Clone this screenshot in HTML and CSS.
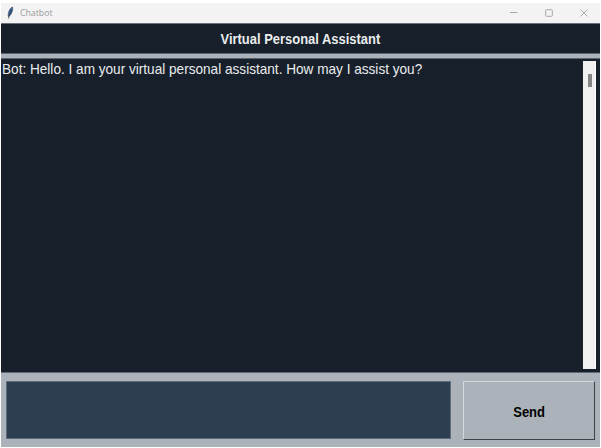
FILE: index.html
```html
<!DOCTYPE html>
<html lang="en">
<head>
<meta charset="utf-8">
<title>Chatbot</title>
<link rel="stylesheet" href="styles.css">
</head>
<body>
<div class="window">
  <header class="titlebar">
    <svg class="feather" viewBox="0 0 8 14" width="8" height="14">
      <path d="M6.6 1C4.3 1.5 2.4 5 2.1 9L2.5 10.8C4.8 9.7 7.4 5 6.6 1Z" fill="#3b6296" stroke="#33435a" stroke-width=".5"/>
      <path d="M5.3 3.5L2.3 12.8" fill="none" stroke="#26303e" stroke-width=".6"/>
    </svg>
    <span class="title">Chatbot</span>
    <div class="controls">
      <svg viewBox="0 0 8 8" width="8" height="8"><path d="M0 3.5H7.5"/></svg>
      <svg viewBox="0 0 8 8" width="8" height="8"><rect x=".7" y=".7" width="6.6" height="6.6" rx=".7"/></svg>
      <svg viewBox="0 0 8 8" width="8" height="8"><path d="M.5 .5L7.5 7.5M7.5 .5L.5 7.5"/></svg>
    </div>
  </header>
  <h1 class="heading"><span>Virtual Personal Assistant</span></h1>
  <main class="chat">
    <p class="message"><span>Bot: Hello. I am your virtual personal assistant. How may I assist you?</span></p>
    <div class="scrollbar"><div class="thumb"></div></div>
  </main>
  <footer class="composer">
    <div class="entry"></div>
    <button class="send"><span>Send</span></button>
  </footer>
</div>
</body>
</html>
```
FILE: styles.css
```css
* { box-sizing: border-box; }
body {
  margin: 0;
  padding: 3px 1px 1px;
  height: 448px;
  background: #fff;
  overflow: hidden;
  font-family: "Liberation Sans", Arial, sans-serif;
}
.window {
  height: 444px;
  display: flex;
  flex-direction: column;
  background: #abb2b9;
}
.titlebar {
  height: 20px;
  display: flex;
  align-items: center;
  padding: 0 12px 0 5px;
  background: #f3f3f3;
}
.title {
  margin-left: 5.5px;
  font: 9.5px/12px "Open Sans", sans-serif;
  color: #999;
  transform: scaleX(.92);
  transform-origin: left;
}
.controls {
  margin-left: auto;
  display: flex;
  gap: 27px;
}
.controls svg { fill: none; stroke: #a8a8a8; stroke-width: 1; }
.heading {
  height: 31px;
  margin: 0;
  border-top: 1px solid #69727b;
  border-bottom: 1px solid #59636d;
  background: #17202a;
  color: #eaecee;
  font-size: 14px;
  line-height: 31px;
  text-align: center;
}
.heading span { display: inline-block; transform: scaleX(.925); }
.chat {
  height: 315px;
  margin-top: 4px;
  padding: 2px 4px 3px 1px;
  display: flex;
  justify-content: space-between;
  border-top: 1px solid #59636d;
  border-bottom: 1px solid #606973;
  background: #17202a;
  color: #eaecee;
}
.message {
  margin: 0;
  font-size: 14.4px;
  line-height: 17px;
  white-space: nowrap;
}
.message span { display: inline-block; transform: scaleX(.945); transform-origin: left; }
.scrollbar {
  width: 13px;
  padding: 13px 4px 0 5px;
  background: #f0f0f0;
  border-right: 1px solid #fff;
}
.thumb { width: 4px; height: 13px; background: #858585; }
.composer {
  flex: 1;
  display: flex;
  gap: 12px;
  padding: 8px 5px 7px;
}
.entry {
  width: 445px;
  height: 58px;
  background: #2c3e50;
  border: 1px solid #5d6d7b;
}
.send {
  width: 132px;
  height: 59px;
  padding: 2px 0 0;
  border: 1px solid;
  border-color: #d5d9dc #3e4247 #3e4247 #d5d9dc;
  border-radius: 0;
  background: #abb2b9;
  color: #000;
  font: bold 14px/16px "Liberation Sans", Arial, sans-serif;
}
.send span { display: inline-block; transform: scaleX(.93); }
```
